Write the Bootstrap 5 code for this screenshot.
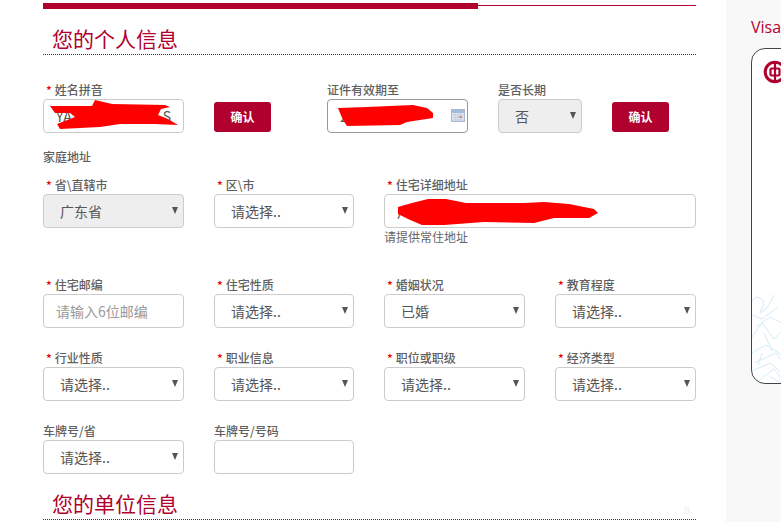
<!DOCTYPE html>
<html lang="zh">
<head>
<meta charset="utf-8">
<title>个人信息</title>
<link rel="stylesheet" href="https://cdn.jsdelivr.net/npm/bootstrap@5.3.0/dist/css/bootstrap.min.css">
<style>
html,body{height:100%;overflow:hidden;background:#fff}
body{font-family:"Noto Sans CJK SC","Liberation Sans",sans-serif;color:#666;font-size:14px}
.shell{width:781px;height:522px;overflow:hidden}
.main-col{width:653px;margin-left:43px;padding-top:3px;flex:none}
.side-col{width:55px;margin-left:30px;background:#f8f8f8;flex:none;padding-left:25px;position:relative}
.bar-thick{width:435px;height:6px;background:#b0002d}
.bar-thin{height:1px;background:#b0002d;margin-top:2px}
.sec-title{font-size:21px;line-height:28px;height:31px;padding-bottom:2px;color:#b0002d;padding-left:9px;border-bottom:1px dotted #8a1030;margin:0;font-weight:400}
.sec-a{margin-top:15px}
.sec-b{margin-top:15px}
.fld-grid{display:grid;grid-template-columns:141px 140px 141px 141px;column-gap:30px}
.wide-2{grid-column:span 2}
.lbl{display:block;font-size:12px;line-height:18px;height:18px;margin:0;font-weight:500;color:#5f5f5f;white-space:nowrap}
.lbl.req{padding-left:3px}
.lbl.req::before{content:"*";color:#e60000;margin-right:3px}
.ctl.form-control,.ctl.form-select{height:34px;border:1px solid #ccc;border-radius:4px;font-size:14px;line-height:20px;color:#555;box-shadow:none;background-color:#fff}
.ctl.form-control{padding:6px 12px}
.ctl.form-control::placeholder{color:#999}
.ctl.form-select{padding:6px 20px 6px 16px;background-image:url("data:image/svg+xml,%3Csvg xmlns='http://www.w3.org/2000/svg' width='6' height='7'%3E%3Cpath d='M0 0h6L3 7z' fill='%23555'/%3E%3C/svg%3E");background-position:right 5px top 12px;background-size:6px 7px;background-repeat:no-repeat}
.ctl.form-select:disabled{background-color:#eee;color:#555}
.row-one{margin-top:26px;gap:30px}
.w-name{width:141px}
.w-date{width:141px;margin-left:26px}
.w-long{width:84px}
.ok-btn.btn{width:57px;height:30px;padding:0;margin-top:21px;background:#b0002d;border:0;border-radius:3px;color:#fff;font-size:12px;font-weight:700;line-height:30px}
.date-ctl.form-control{border-color:#999}
.sub-head{margin-top:15px}
.r2{margin-top:10px}
.r3{margin-top:30px}
.r4,.r5{margin-top:21px}
.hint{font-size:12px;line-height:18px;color:#666}
.scrib{position:absolute;left:0;top:0;pointer-events:none;overflow:visible}
.cal{position:absolute;right:3px;top:10px}
.visa{position:absolute;left:25px;top:17px;font-size:16px;line-height:20px;color:#b0002d;white-space:nowrap;font-family:"Open Sans",sans-serif}
.bank-card{position:absolute;left:25px;top:48px;width:90px;height:336px;background:#fff;border:1px solid #444;border-radius:14px;overflow:hidden}
.bank-logo{position:absolute;left:10.500px;top:11px}
.bank-art{position:absolute;left:0;bottom:0}
.ghost{position:absolute;left:684px;top:502px;font-size:11px;color:#eee;line-height:14px}
</style>
</head>
<body>
<div class="shell d-flex position-relative">
  <main class="main-col">
    <div class="d-flex"><div class="bar-thick"></div><div class="bar-thin flex-grow-1"></div></div>
    <h2 class="sec-title sec-a">您的个人信息</h2>

    <div class="d-flex row-one">
      <div class="w-name">
        <label class="lbl req">姓名拼音</label>
        <div class="position-relative">
          <input class="form-control ctl" value="YA                             S">
          <svg class="scrib" width="141" height="34"><path d="M7 7 L49 7 L52 1 L69 5 L122 6 L127 8 L118 10 L115 16 L125 20 L135 26 L112 25 L77 25 L57 28 L17 30 L14 25 L32 18 L27 14 L12 14 Z" fill="#f00"/></svg>
        </div>
      </div>
      <button type="button" class="btn ok-btn">确认</button>
      <div class="w-date">
        <label class="lbl">证件有效期至</label>
        <div class="position-relative">
          <input class="form-control ctl date-ctl" value="2">
          <svg class="scrib" width="141" height="34"><path d="M11 9 L40 8 L86 6 L100 9 L106 14 L106 19 L80 23 L73 26 L20 27 L16 21 L13 14 Z" fill="#f00"/></svg>
          <svg class="cal" width="14" height="13" viewBox="0 0 14 13"><rect x=".5" y=".5" width="13" height="12" fill="#e6ebf5" stroke="#a9b9d2"/><rect x="1" y="1" width="12" height="3" fill="#a5bbdc"/><path d="M1 6h12M1 8.500h12M1 11h12M4 4v8M7 4v8M10 4v8" stroke="#c0cbdd" stroke-width="1"/><rect x="8" y="7" width="3" height="2" fill="#e08a8a"/></svg>
        </div>
      </div>
      <div class="w-long">
        <label class="lbl">是否长期</label>
        <select class="form-select ctl" disabled><option>否</option></select>
      </div>
      <button type="button" class="btn ok-btn">确认</button>
    </div>

    <div class="lbl sub-head">家庭地址</div>

    <div class="fld-grid r2">
      <div><label class="lbl req">省\直辖市</label><select class="form-select ctl" disabled><option>广东省</option></select></div>
      <div><label class="lbl req">区\市</label><select class="form-select ctl"><option>请选择..</option></select></div>
      <div class="wide-2">
        <label class="lbl req">住宅详细地址</label>
        <div class="position-relative">
          <input class="form-control ctl" value="广">
          <svg class="scrib" width="311" height="34"><path d="M14 13 L28 9 L44 5 L62 5 L82 9 L140 9 L160 8 L185 10 L210 15 L214 19 L205 24 L170 24 L150 29 L100 28 L60 31 L38 31 L24 25 L14 20 Z" fill="#f00"/></svg>
        </div>
        <div class="hint">请提供常住地址</div>
      </div>
    </div>

    <div class="fld-grid r3">
      <div><label class="lbl req">住宅邮编</label><input class="form-control ctl" placeholder="请输入6位邮编"></div>
      <div><label class="lbl req">住宅性质</label><select class="form-select ctl"><option>请选择..</option></select></div>
      <div><label class="lbl req">婚姻状况</label><select class="form-select ctl"><option>已婚</option></select></div>
      <div><label class="lbl req">教育程度</label><select class="form-select ctl"><option>请选择..</option></select></div>
    </div>

    <div class="fld-grid r4">
      <div><label class="lbl req">行业性质</label><select class="form-select ctl"><option>请选择..</option></select></div>
      <div><label class="lbl req">职业信息</label><select class="form-select ctl"><option>请选择..</option></select></div>
      <div><label class="lbl req">职位或职级</label><select class="form-select ctl"><option>请选择..</option></select></div>
      <div><label class="lbl req">经济类型</label><select class="form-select ctl"><option>请选择..</option></select></div>
    </div>

    <div class="fld-grid r5">
      <div><label class="lbl">车牌号/省</label><select class="form-select ctl"><option>请选择..</option></select></div>
      <div><label class="lbl">车牌号/号码</label><input class="form-control ctl"></div>
    </div>

    <h2 class="sec-title sec-b">您的单位信息</h2>
  </main>

  <aside class="side-col">
    <div class="visa">Visa</div>
    <div class="bank-card">
      <svg class="bank-logo" width="24" height="24" viewBox="0 0 24 24" fill="none" stroke="#b0002d"><circle cx="12" cy="12" r="9.800" stroke-width="3"/><rect x="7.500" y="8.500" width="9" height="7" rx="1" stroke-width="2.200"/><path d="M12 2v20" stroke-width="2.200"/></svg>
      <svg class="bank-art" width="30" height="90" viewBox="0 0 30 90" fill="none" stroke="#d2ebf5" stroke-width="1"><path d="M0 8C4 2 10 4 12 10L8 20L16 14L22 2M0 22L10 26L26 14M4 34L18 24L30 30M0 44L10 30L22 46L30 38M12 40L20 58M0 60L14 52L30 62M2 70L24 60L30 68M0 78L18 70L30 80M6 88L22 76L30 86M10 60L6 72M18 84L30 90"/></svg>
    </div>
  </aside>
  <div class="ghost">8</div>
</div>
<script src="https://cdn.jsdelivr.net/npm/bootstrap@5.3.0/dist/js/bootstrap.bundle.min.js"></script>
</body>
</html>
